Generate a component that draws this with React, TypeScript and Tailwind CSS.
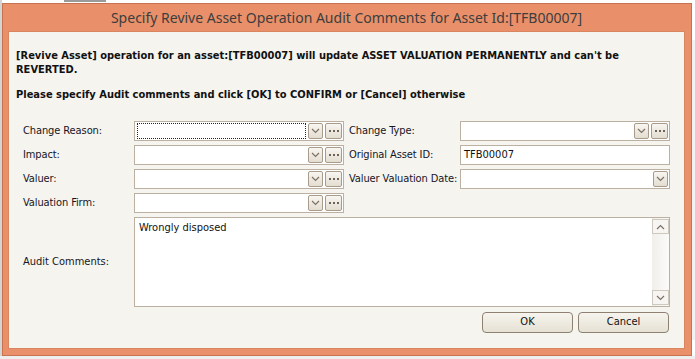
import React from 'react'

const ui = { fontFamily: '"DejaVu Sans Condensed", "DejaVu Sans", sans-serif' }

function Chevron({ up = false }: { up?: boolean }) {
  return (
    <svg width="9" height="6" viewBox="0 0 9 6" className={up ? 'rotate-180' : ''}>
      <polyline points="1,1 4.5,4.5 8,1" fill="none" stroke="#7d7064" strokeWidth="1.2" />
    </svg>
  )
}

function DropBtn() {
  return (
    <div className="w-[15px] h-[16px] flex items-center justify-center rounded-[2px] border border-[#a89b8c] bg-gradient-to-b from-[#f8f6f1] to-[#e3ddd1]">
      <Chevron />
    </div>
  )
}

function MoreBtn() {
  return (
    <div className="w-[17px] h-[16px] flex items-center justify-center gap-[2px] rounded-[2px] border border-[#a89b8c] bg-gradient-to-b from-[#f8f6f1] to-[#e3ddd1]">
      <span className="w-[2px] h-[2px] bg-[#6f6357]" />
      <span className="w-[2px] h-[2px] bg-[#6f6357]" />
      <span className="w-[2px] h-[2px] bg-[#6f6357]" />
    </div>
  )
}

function Combo({ more = true, focus = false, value = '' }: { more?: boolean; focus?: boolean; value?: string }) {
  return (
    <div className="h-[20px] flex items-center border border-[#bcb0a3] bg-white pl-[2px] pr-[1px] gap-[2px]">
      <div className={`flex-1 h-[16px] flex items-center px-[1px] text-[11px] text-[#111] ${focus ? 'outline outline-1 outline-dotted outline-[#222] -outline-offset-1' : ''}`}>
        {value}
      </div>
      <DropBtn />
      {more && <MoreBtn />}
    </div>
  )
}

function Label({ children }: { children: React.ReactNode }) {
  return <div className="h-[20px] flex items-center text-[11px] text-[#15151f] tracking-[-0.1px]">{children}</div>
}

export default function App() {
  return (
    <div className="w-[695px] h-[359px] overflow-hidden bg-white relative" style={ui}>
      {/* background grid peeking out */}
      <div className="absolute left-0 top-0 w-[2px] h-[359px] bg-[#d4d4d4]" />
      <div className="absolute left-[64px] top-0 w-[42px] h-[2px] bg-[#9a9a9a]" />
      <div className="absolute left-0 bottom-0 w-[695px] h-[3px] bg-[#eeeeee]" />
      <div className="absolute right-0 top-[40px] w-[3px] h-[300px] bg-[#f2f2f2]" />

      <div className="absolute left-[2px] top-[3px] w-[690px] h-[353px] flex flex-col border border-[#c7734f] bg-[#e9906a] pl-[5px] pr-[6px] pb-[6px]">
        {/* title bar */}
        <div className="h-[27px] flex items-center justify-center text-[14px] text-[#3d3d3d] pb-[1px]" style={{ fontFamily: '"Noto Sans", "Open Sans", sans-serif' }}>
          Specify Revive Asset Operation Audit Comments for Asset Id:[TFB00007]
        </div>

        {/* client area */}
        <div className="flex-1 flex flex-col bg-[#f5f4ef] border border-[#d88560] pl-[7px] pr-[14px]">
          <div className="pt-[17px] text-[11px] font-bold text-[#111] leading-[14px]">
            <div>[Revive Asset] operation for an asset:[TFB00007] will update ASSET VALUATION PERMANENTLY and can&apos;t be</div>
            <div>REVERTED.</div>
            <div className="mt-[11px]">Please specify Audit comments and click [OK] to CONFIRM or [Cancel] otherwise</div>
          </div>

          <div className="mt-[19px] ml-[7px] grid grid-cols-[111px_210px_5px_111px_210px] gap-y-[4px]">
            <Label>Change Reason:</Label>
            <Combo focus />
            <div />
            <Label>Change Type:</Label>
            <Combo />

            <Label>Impact:</Label>
            <Combo />
            <div />
            <Label>Original Asset ID:</Label>
            <div className="h-[20px] flex items-center border border-[#bcb0a3] bg-white px-[3px] text-[11px] text-[#111]">TFB00007</div>

            <Label>Valuer:</Label>
            <Combo />
            <div />
            <Label>Valuer Valuation Date:</Label>
            <Combo more={false} />

            <Label>Valuation Firm:</Label>
            <Combo />
            <div />
            <div />
            <div />

            <div className="h-[90px] flex items-center text-[11px] text-[#15151f]">Audit Comments:</div>
            <div className="col-span-4 h-[90px] flex border border-[#bcb0a3] bg-white">
              <div className="flex-1 px-[4px] pt-[2px] text-[11px] text-[#111]">Wrongly disposed</div>
              <div className="w-[17px] flex flex-col justify-between bg-gradient-to-r from-[#f1efea] to-[#fbfbfa] pb-[1px] pt-[1px]">
                <div className="h-[15px] flex items-center justify-center border border-[#cfc8bf] bg-[#f6f5f2]">
                  <Chevron up />
                </div>
                <div className="h-[15px] flex items-center justify-center border border-[#cfc8bf] bg-[#f6f5f2]">
                  <Chevron />
                </div>
              </div>
            </div>
          </div>

          <div className="mt-[5px] flex justify-end gap-[5px] pr-[1px]">
            <button className="w-[91px] h-[21px] rounded-[4px] border border-[#8f8172] bg-gradient-to-b from-[#f6f4ee] to-[#e6e1d4] text-[11px] text-[#111]">OK</button>
            <button className="w-[91px] h-[21px] rounded-[4px] border border-[#8f8172] bg-gradient-to-b from-[#f6f4ee] to-[#e6e1d4] text-[11px] text-[#111]">Cancel</button>
          </div>
        </div>
      </div>
    </div>
  )
}
